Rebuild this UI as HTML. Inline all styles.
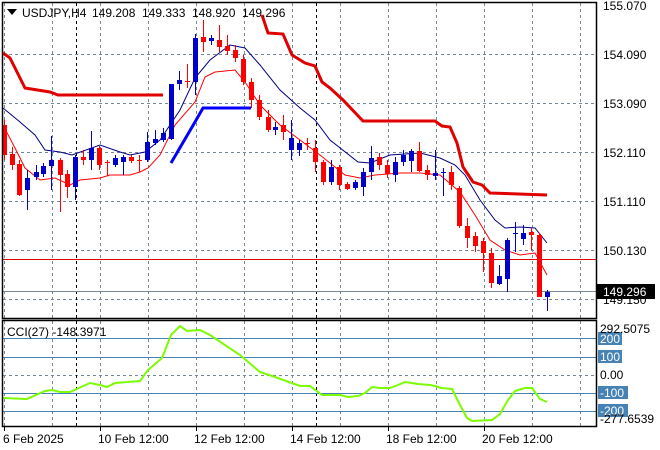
<!DOCTYPE html>
<html><head><meta charset="utf-8"><style>
html,body{margin:0;padding:0;background:#fff;width:660px;height:450px;overflow:hidden}
svg{display:block;font-family:"Liberation Sans",sans-serif;font-size:12px}
</style></head><body>
<svg id="s" width="660" height="450" xmlns="http://www.w3.org/2000/svg">
<g id="grid" stroke="#778899" stroke-width="1" stroke-dasharray="3,3" fill="none"></g>
<line x1="3" y1="259.5" x2="596" y2="259.5" stroke="#e00000" stroke-width="1"/>
<line x1="3" y1="291.5" x2="596" y2="291.5" stroke="#778899" stroke-width="1"/>
<g id="lvl" stroke="#4682b4" stroke-width="1"></g>
<polyline fill="none" stroke="#e00000" stroke-width="3" points="3,53 10,58 25,88 50,92 58,95 163,95"/>
<polyline fill="none" stroke="#e00000" stroke-width="3" points="262,15 268,33 283,34 292,55 305,63 315,66 322,82 330,88 343,100 363,121 435,121 442,126 450,127 457,143 463,167 473,182 482,185 490,193 547,195"/>
<polyline fill="none" stroke="#0000ff" stroke-width="3" points="171,163 195,122 203,108 251,108"/>
<polyline fill="none" stroke="#000080" stroke-width="1" points="3,108 20,122 35,135 45,150 60,152 72,155 100,145 120,152 130,155 145,152 160,140 180,110 195,78 210,60 230,45 245,48 260,65 280,90 300,108 315,120 330,140 358,162 370,163 390,155 420,153 440,158 455,165 465,175 480,200 495,220 505,228 520,227 535,228 547,243"/>
<polyline fill="none" stroke="#ff0000" stroke-width="1" points="3,125 15,148 25,168 40,180 55,178 70,185 80,180 100,178 110,175 130,175 140,172 148,168 160,155 175,125 195,102 205,77 215,72 235,70 245,82 260,105 280,125 300,140 320,155 345,175 360,178 375,175 400,173 420,173 440,175 460,192 475,215 490,240 505,250 520,255 535,253 547,275"/>
<g id="c"></g>
<polyline fill="none" stroke="#7cfc00" stroke-width="2" points="3,398 27,399 45,391 52,390 60,392 70,392 90,383 100,385 107,387 115,383 140,381 148,370 162,358 171,335 180,326 187,331 200,330 210,335 240,355 260,372 275,377 300,386 310,386 318,392 322,395 340,395 348,397 358,396 365,393 372,387 380,388 390,388 398,385 405,382 418,384 430,385 435,386 441,388 452,389 460,405 467,418 472,421 492,420 500,414 508,400 515,391 525,388 532,388 540,399 547,402"/>
<rect x="2.5" y="2.5" width="594" height="316" fill="none" stroke="#000" stroke-width="1.5"/>
<rect x="2.5" y="320.5" width="594" height="106" fill="none" stroke="#000" stroke-width="1.5"/>
<path d="M7 9 L17 9 L12 15 Z" fill="#000"/>
<g fill="#000">
<text x="22" y="17">USDJPY,H4</text>
<text x="92" y="17">149.208</text>
<text x="142" y="17">149.333</text>
<text x="192" y="17">148.920</text>
<text x="242" y="17">149.296</text>
</g>
<text x="7" y="336" fill="#000">CCI(27) -148.3971</text>
<g fill="#000">
<text x="603" y="10">155.070</text>
<text x="603" y="59">154.090</text>
<text x="603" y="108">153.090</text>
<text x="603" y="157">152.110</text>
<text x="603" y="206">151.110</text>
<text x="603" y="255">150.130</text>
<text x="603" y="304">149.150</text>
</g>
<rect x="597" y="284" width="58" height="15" fill="#000"/>
<text x="603" y="296" fill="#fff">149.296</text>
<g fill="#4682b4">
<rect x="598" y="332" width="24" height="13"/><rect x="598" y="350" width="24" height="13"/>
<rect x="598" y="386" width="30" height="13"/><rect x="598" y="404" width="30" height="13"/>
</g>
<text x="600" y="333" fill="#000">292.5075</text>
<g fill="#fff"><text x="600" y="343">200</text><text x="600" y="361">100</text><text x="600" y="397">-100</text><text x="600" y="415">-200</text></g>
<text x="600" y="379" fill="#000">0.00</text>
<text x="600" y="423" fill="#000">-277.6539</text>
<g fill="#000">
<text x="3" y="443">6 Feb 2025</text>
<text x="98" y="443">10 Feb 12:00</text>
<text x="194" y="443">12 Feb 12:00</text>
<text x="290" y="443">14 Feb 12:00</text>
<text x="386" y="443">18 Feb 12:00</text>
<text x="482" y="443">20 Feb 12:00</text>
</g>
<g id="ticks" stroke="#000"></g>
</svg>
<script>
var NS="http://www.w3.org/2000/svg";
function el(p,t,a){var e=document.createElementNS(NS,t);for(var k in a)e.setAttribute(k,a[k]);p.appendChild(e);return e;}
var g=document.getElementById("grid");
[54,103,152,201,250,299].forEach(function(y){el(g,"line",{x1:3,y1:y+.5,x2:596,y2:y+.5});});
el(g,"line",{x1:3,y1:375.5,x2:596,y2:375.5});
[4,52,100,148,196,244,292,340,388,436,484,532,580].forEach(function(x){
 el(g,"line",{x1:x+.5,y1:3,x2:x+.5,y2:318});el(g,"line",{x1:x+.5,y1:321,x2:x+.5,y2:426});});
[76,316].forEach(function(x){
 el(g,"line",{x1:x+.5,y1:3,x2:x+.5,y2:318,stroke:"#000"});el(g,"line",{x1:x+.5,y1:321,x2:x+.5,y2:426,stroke:"#000"});});
var l=document.getElementById("lvl");
[338,357,393,411].forEach(function(y){el(l,"line",{x1:3,y1:y+.5,x2:596,y2:y+.5});});
var t=document.getElementById("ticks");
[4,100,196,292,388,484].forEach(function(x){el(t,"line",{x1:x+.5,y1:427,x2:x+.5,y2:431});});
var C=[[4,'r',125,155,120,160],[12,'r',154,165,147,170],[19,'r',164,195,160,196],[27,'b',178,190,170,210],[36,'b',172,177,165,180],[43,'b',166,174,163,177],[51,'b',160,166,136,190],[60,'r',160,175,158,212],[67,'r',174,187,170,198],[75,'b',157,187,155,200],[83,'r',157,160,150,165],[91,'b',148,160,131,170],[99,'r',148,165,146,170],[107,'r',162,163,160,176],[115,'b',158,165,155,167],[123,'b',157,162,155,175],[131,'r',157,161,155,163],[139,'r',160,161,155,172],[147,'b',142,160,132,162],[155,'b',139,143,130,145],[163,'b',133,140,128,142],[171,'b',84,139,84,140],[179,'b',80,84,71,90],[187,'r',81,82,64,88],[195,'b',38,82,34,95],[203,'r',37,42,20,52],[211,'b',38,41,35,45],[219,'r',40,47,25,52],[227,'r',46,51,35,55],[235,'r',50,58,45,62],[243,'r',59,82,55,85],[251,'r',82,100,78,108],[259,'r',100,117,95,120],[268,'r',117,130,110,132],[275,'b',127,130,122,135],[283,'r',125,132,115,140],[291,'b',138,150,120,160],[299,'b',143,150,140,156],[307,'r',143,144,138,150],[315,'r',148,162,140,172],[323,'r',162,182,160,185],[331,'b',167,182,160,185],[339,'r',167,185,165,190],[347,'r',184,189,182,190],[355,'b',182,188,180,190],[363,'b',172,187,168,196],[371,'b',158,172,146,180],[379,'r',157,165,153,170],[387,'r',165,174,160,178],[395,'b',162,175,157,182],[403,'b',155,162,150,166],[411,'b',151,161,149,172],[419,'r',151,171,142,172],[427,'r',170,175,165,180],[435,'b',173,176,150,180],[443,'b',172,173,168,196],[451,'r',172,185,166,190],[459,'r',188,226,186,228],[467,'r',226,238,218,248],[475,'r',236,246,232,252],[483,'r',241,253,238,272],[491,'r',253,283,248,288],[499,'b',276,284,265,285],[507,'b',240,279,238,292],[515,'b',233,234,222,252],[523,'b',233,239,225,245],[531,'r',232,235,228,250],[539,'r',235,297,233,297],[547,'b',292,297,290,311]];
var c=document.getElementById("c");
C.forEach(function(d){var col=d[1]=='r'?'#ff0000':'#0000cd';
 el(c,"line",{x1:d[0]+.5,y1:d[4],x2:d[0]+.5,y2:d[5],stroke:col});
 el(c,"rect",{x:d[0]-2,y:d[2],width:5,height:Math.max(1,d[3]-d[2]),fill:col});});
</script>
</body></html>
